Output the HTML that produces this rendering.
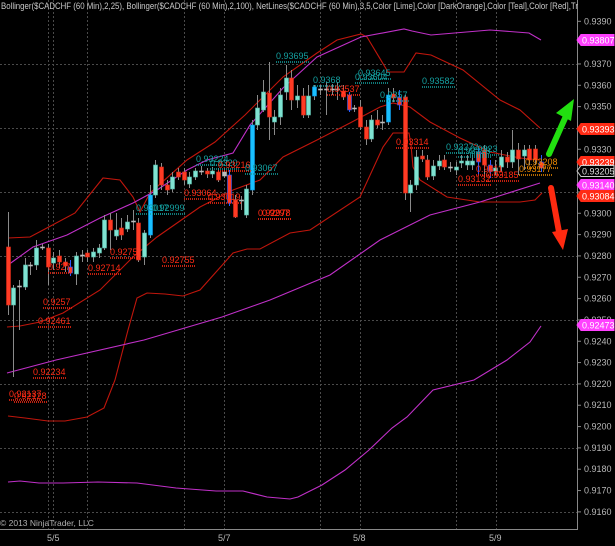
<!DOCTYPE html>
<html><head><meta charset="utf-8"><style>
html,body{margin:0;padding:0;background:#000;width:615px;height:546px;overflow:hidden}
svg{display:block}
text{font-family:"Liberation Sans",sans-serif}
</style></head><body>
<svg id="s" width="615" height="546" viewBox="0 0 615 546" xmlns="http://www.w3.org/2000/svg">
<rect width="615" height="546" fill="#000"/>
<g id="grid" stroke="#4a4a4a" stroke-width="1" stroke-dasharray="2,2"></g>
<line x1="577.5" y1="0" x2="577.5" y2="529" stroke="#888"/>
<line x1="0" y1="529.5" x2="578" y2="529.5" stroke="#888"/>
<g fill="none" stroke-width="1.1">
<path stroke="#c0160c" d="M8,238 L30,237 L45,229 L75,213 L103,178 L120,180 L133,197 L140,212 L150,193 L187,160 L215,142 L245,115 L270,90 L283,77 L317,53 L337,40 L361,34 L367,37 L388,72 L404,72 L416,53 L431,55 L463,70 L500,100 L520,110 L540,128"/>
<path stroke="#c0160c" d="M7,327 L20,326 L40,322 L63,313 L100,290 L133,257 L157,237 L200,207 L233,190 L260,180 L283,157 L317,140 L350,123 L380,107 L393,103 L410,107 L430,122 L460,138 L490,152 L520,158 L540,160"/>
<path stroke="#c0160c" d="M8,416 L25,418 L48,421 L65,421 L87,417 L104,408 L115,380 L128,330 L137,298 L147,293 L165,294 L183,296 L200,290 L233,253 L247,249 L260,249 L290,233 L310,230 L360,197 L383,147 L393,133 L409,133 L411,145 L413,167 L420,180 L447,197 L480,202 L520,202 L535,200 L542,193"/>
<path stroke="#c030c8" d="M8,265 L33,247 L67,235 L100,218 L133,203 L157,190 L187,170 L207,160 L233,153 L250,125 L283,88 L317,57 L361,37 L404,29 L412,31 L431,35 L490,30 L529,33 L541,40"/>
<path stroke="#c030c8" d="M7,373 L56,360 L144,340 L222,317 L270,300 L330,275 L380,240 L430,215 L480,202 L540,183"/>
<path stroke="#c030c8" d="M8,482 L20,481 L39,483 L63,483 L98,482 L137,483 L176,488 L216,491 L243,491 L267,497 L290,499 L298,497 L322,485 L345,470 L369,450 L392,428 L407,417 L433,390 L474,380 L507,360 L530,342 L541,326"/>
</g>
<g id="cand"></g>
<g id="lbl" font-size="9"></g>
<g id="axis" font-size="9" fill="#b8b8b8"></g>
<line x1="549" y1="154" x2="566" y2="116" stroke="#22e010" stroke-width="6" stroke-linecap="round"/>
<polygon points="574,99 571,121 556,113" fill="#22e010"/>
<line x1="551" y1="188" x2="559" y2="232" stroke="#ff2a10" stroke-width="6" stroke-linecap="round"/>
<polygon points="563,250 552,232 568,229" fill="#ff2a10"/>
<text x="1" y="9" font-size="9" fill="#c8c8c8" textLength="577" lengthAdjust="spacingAndGlyphs">Bollinger($CADCHF (60 Min),2,25), Bollinger($CADCHF (60 Min),2,100), NetLines($CADCHF (60 Min),3,5,Color [Lime],Color [DarkOrange],Color [Teal],Color [Red],Tr</text>
<text x="0" y="526" font-size="8.5" fill="#b0b0b0">© 2013 NinjaTrader, LLC</text>
<g font-size="9" fill="#b8b8b8">
<text x="47" y="541">5/5</text><text x="218" y="541">5/7</text><text x="353" y="541">5/8</text><text x="489" y="541">5/9</text>
</g>
</svg>
<script>
var NS="http://www.w3.org/2000/svg";
function el(p,t,a,tx){var e=document.createElementNS(NS,t);for(var k in a)e.setAttribute(k,a[k]);if(tx!=null)e.textContent=tx;document.getElementById(p).appendChild(e);return e;}
[48,53,87,184,224,320,360,456,496].forEach(function(x){el('grid','line',{x1:x+.5,y1:0,x2:x+.5,y2:529});});
[64,128,192,256,320,384,448,512].forEach(function(y){el('grid','line',{x1:0,y1:y+.5,x2:577,y2:y+.5});});
for(var i=0;i<=23;i++){var p=0.9390-i*0.001,y=21.3+i*21.33;el('axis','line',{x1:577,y1:y,x2:581,y2:y,stroke:'#888'});el('axis','text',{x:584,y:y+3},p.toFixed(4));}
var C=[[8,247,305,'r',212,315],[13,288,305,'t',285,377],[19,286,287,'d',280,330],[25,265,287,'t',258,290],[30,265,266,'d',262,275],[36,248,265,'t',240,270],[42,247,248,'d',244,250],[48,248,267,'r',244,285],[53,258,263,'t',252,270],[59,256,262,'r',250,268],[65,262,266,'r',258,272],[70,267,273,'b',260,276],[76,256,274,'t',252,285],[82,255,256,'d',250,262],[87,253,257,'r',250,262],[93,252,257,'t',248,262],[99,248,253,'t',244,258],[104,220,248,'t',215,250],[110,220,230,'r',213,250],[116,230,236,'t',213,240],[121,228,235,'r',218,240],[127,222,229,'t',215,232],[133,221,222,'d',210,230],[138,223,260,'r',218,262],[144,233,257,'t',230,265],[150,195,235,'c',185,238],[155,165,195,'t',160,198],[161,167,185,'r',163,190],[167,185,190,'r',180,195],[172,177,189,'t',172,192],[178,172,177,'r',168,180],[184,172,180,'r',168,185],[189,177,184,'t',172,188],[195,171,177,'t',168,180],[201,171,172,'d',166,175],[207,171,174,'r',168,178],[212,171,174,'t',167,178],[218,172,180,'r',168,182],[224,172,176,'d',168,178],[229,175,203,'b',170,206],[235,200,217,'r',195,218],[241,200,201,'d',196,210],[246,189,215,'t',185,218],[252,125,190,'c',120,195],[257,108,125,'t',95,130],[263,92,110,'t',80,112],[269,93,117,'r',62,140],[274,117,122,'t',110,135],[280,95,117,'t',88,125],[286,78,92,'t',65,100],[291,78,100,'r',70,110],[297,96,100,'t',85,108],[303,96,115,'r',88,118],[308,96,115,'t',85,118],[314,87,96,'c',85,100],[320,89,90,'d',85,95],[326,89,90,'d',82,115],[332,89,90,'d',84,95],[337,89,90,'d',82,100],[343,91,97,'r',85,100],[349,95,110,'b',92,112],[354,108,109,'d',105,112],[360,107,127,'r',100,130],[366,127,139,'r',120,145],[371,120,139,'t',115,142],[377,120,125,'r',110,128],[382,122,123,'d',115,130],[388,95,122,'c',88,125],[393,94,98,'r',88,102],[399,97,105,'b',90,110],[405,97,193,'r',95,200],[410,185,193,'t',180,212],[416,157,185,'t',150,190],[422,156,159,'r',150,162],[427,160,177,'r',155,180],[433,166,176,'t',160,180],[439,161,166,'t',155,170],[444,160,167,'r',155,170],[450,167,168,'d',162,172],[456,167,170,'t',162,175],[461,161,163,'t',155,168],[467,161,165,'t',155,170],[472,161,165,'t',155,170],[478,152,162,'b',148,175],[484,150,165,'r',145,178],[490,165,171,'b',160,178],[495,168,171,'t',160,175],[501,157,167,'t',150,172],[507,157,162,'r',152,168],[512,150,162,'t',130,168],[518,150,159,'r',143,175],[524,150,156,'t',145,170],[529,149,160,'r',145,165],[535,149,160,'r',145,165],[541,162,168,'b',155,172]];
C.forEach(function(c){var x=c[0],t=c[1],b=c[2],k=c[3];
el('cand','line',{x1:x+.5,y1:c[4],x2:x+.5,y2:c[5],stroke:k=='b'?'#2a5cff':'#8a8a8a','stroke-width':1});
var f={t:'#7fe3d2',r:'#ff3b24',c:'#19c0ff',b:'#ff3b24',d:'#bbbbbb'}[k];
var s={t:'#5ab8a8',r:'#d82a18',c:'#0a9ae8',b:'#2a5cff',d:'#bbbbbb'}[k];
el('cand','rect',{x:x-1.5,y:t,width:4,height:Math.max(1,b-t),fill:f,stroke:s,'stroke-width':0.6});});
var L=[[276,59,'0.93695','t'],[313,83,'0.9368','t'],[358,76,'0.93645','t'],[355,80,'0.93604','t'],[422,84,'0.93582','t'],[380,98,'0.9357','t'],[327,92,'0.93537','r'],[396,145,'0.93314','r'],[446,150,'0.93272','t'],[458,154,'0.93228','t'],[470,152,'0.9323','t'],[196,162,'0.93224','t'],[210,166,'0.9320','t'],[218,168,'0.93216','r'],[136,211,'0.93017','t'],[152,211,'0.92999','t'],[245,171,'0.93067','t'],[184,196,'0.93064','r'],[208,200,'0.93019','r'],[258,216,'0.92978','r'],[262,216,'0.9297','r'],[458,182,'0.93132','r'],[476,172,'0.9311','r'],[486,178,'0.93185','r'],[519,172,'0.93177','o'],[525,165,'0.93208','o'],[162,263,'0.92755','r'],[88,271,'0.92714','r'],[48,270,'0.927','r'],[110,255,'0.9275','r'],[43,305,'0.9257','r'],[38,324,'0.92461','r'],[33,375,'0.92234','r'],[9,397,'0.92137','r'],[14,399,'0.92128','r']];
L.forEach(function(l){var col={t:'#14a0a0',r:'#ff2a14',o:'#f08a00'}[l[3]];
el('lbl','text',{x:l[0],y:l[1],fill:col},l[2]);
el('lbl','line',{x1:l[0],y1:l[1]+3,x2:l[0]+l[2].length*4.8,y2:l[1]+3,stroke:col,'stroke-width':1.5,'stroke-dasharray':'1,1'});});
var B=[[40,'0.93807','#ff40ff','#fff'],[129,'0.93393','#ff2a14','#fff'],[162,'0.93239','#ff2a14','#fff'],[171,'0.93205','#000','#ddd'],[185,'0.93140','#ff40ff','#fff'],[196,'0.93084','#ff2a14','#fff'],[325,'0.92473','#ff40ff','#fff']];
B.forEach(function(b){var y=b[0];el('axis','polygon',{points:(577)+','+y+' '+(581)+','+(y-5.5)+' 614,'+(y-5.5)+' 614,'+(y+5.5)+' 581,'+(y+5.5),fill:b[2],stroke:b[2]=='#000'?'#ccc':b[2]});
el('axis','text',{x:582,y:y+3.5,fill:b[3]},b[1]);});
</script>
</body></html>
